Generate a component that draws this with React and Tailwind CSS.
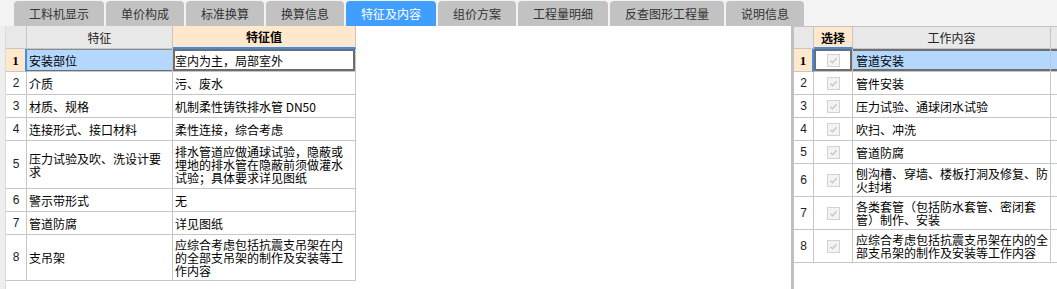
import React from 'react';

const tabs = [
  { label: '工料机显示', w: 'w-[90px]' },
  { label: '单价构成', w: 'w-[78px]' },
  { label: '标准换算', w: 'w-[78px]' },
  { label: '换算信息', w: 'w-[78px]' },
  { label: '特征及内容', w: 'w-[90px]', active: true },
  { label: '组价方案', w: 'w-[78px]' },
  { label: '工程量明细', w: 'w-[90px]' },
  { label: '反查图形工程量', w: 'w-[114px]' },
  { label: '说明信息', w: 'w-[78px]' },
];

const features = [
  { name: '安装部位', value: '室内为主，局部室外', h: 'h-[23px]' },
  { name: '介质', value: '污、废水', h: 'h-[23px]' },
  { name: '材质、规格', value: '机制柔性铸铁排水管 DN50', h: 'h-[23px]' },
  { name: '连接形式、接口材料', value: '柔性连接，综合考虑', h: 'h-[23px]' },
  {
    name: '压力试验及吹、洗设计要求',
    value: '排水管道应做通球试验，隐蔽或埋地的排水管在隐蔽前须做灌水试验；具体要求详见图纸',
    h: 'h-[48px]',
  },
  { name: '警示带形式', value: '无', h: 'h-[23px]' },
  { name: '管道防腐', value: '详见图纸', h: 'h-[23px]' },
  {
    name: '支吊架',
    value: '应综合考虑包括抗震支吊架在内的全部支吊架的制作及安装等工作内容',
    h: 'h-[46px]',
  },
];

const works = [
  { text: '管道安装', h: 'h-[23px]' },
  { text: '管件安装', h: 'h-[23px]' },
  { text: '压力试验、通球闭水试验', h: 'h-[23px]' },
  { text: '吹扫、冲洗', h: 'h-[23px]' },
  { text: '管道防腐', h: 'h-[23px]' },
  { text: '刨沟槽、穿墙、楼板打洞及修复、防火封堵', h: 'h-[33px]' },
  { text: '各类套管（包括防水套管、密闭套管）制作、安装', h: 'h-[33px]' },
  { text: '应综合考虑包括抗震支吊架在内的全部支吊架的制作及安装等工作内容', h: 'h-[33px]' },
];

const RowNum = ({ n, selected, w }) => (
  <div
    className={`${w} shrink-0 flex items-center justify-center border-b border-[#c6c6c6] ${
      selected
        ? 'bg-[#ffe8cc] border-r-2 border-r-[#3d8eea] font-bold text-[13px] [font-family:"Liberation_Serif",serif]'
        : 'border-r text-[12px] text-[#222] [font-family:"Liberation_Sans",sans-serif]'
    }`}
  >
    {n}
  </div>
);

const CheckBox = () => (
  <svg width="13" height="13" viewBox="0 0 13 13">
    <rect x="0.5" y="0.5" width="12" height="12" fill="#f3f3f3" stroke="#d2d2d2" />
    <path d="M3.5 6.8 L5.6 8.8 L9.6 4.2" fill="none" stroke="#c6c6c6" strokeWidth="1.4" />
  </svg>
);

const App = () => {
  return (
    <div className='w-[1057px] h-[289px] overflow-hidden bg-white text-black [font-family:"Noto_Sans_CJK_SC",sans-serif] [text-spacing-trim:space-all]'>
      {/* tabs */}
      <div className="flex items-end gap-[2px] pl-[14px] h-[26px] bg-[#f3f3f3]">
        {tabs.map((tab) => (
          <div
            key={tab.label}
            className={`${tab.w} h-[25px] flex items-center justify-center rounded-t-[4px] text-[12px] ${
              tab.active ? 'bg-[#409eff] text-white' : 'bg-[#c2c2c2] text-[#333]'
            }`}
          >
            {tab.label}
          </div>
        ))}
      </div>

      <div className="flex h-[263px]">
        <div className="w-[6px] shrink-0 bg-[#eeeeee] border-r border-[#dadada]" />

        {/* feature table */}
        <div className="w-[350px] shrink-0 text-[12px] leading-[13px]">
          <div className="flex h-[23px]">
            <div className="w-[21px] bg-[#e8e8e8] border-r border-b border-[#c6c6c6]" />
            <div className="w-[146px] flex items-center justify-center bg-[#e8e8e8] border-r border-b border-[#c6c6c6] text-[#222]">
              特征
            </div>
            <div className="w-[183px] flex items-center justify-center bg-[#ffe8cc] border-r border-[#c6c6c6] border-b-2 border-b-[#3d8eea] font-bold">
              特征值
            </div>
          </div>
          {features.map((row, i) => {
            const selected = i === 0;
            return (
              <div key={row.name} className={`flex ${row.h}`}>
                <RowNum n={i + 1} selected={selected} w="w-[21px]" />
                <div
                  className={`w-[146px] flex items-center pl-[2px] border-r border-b border-[#c6c6c6] ${
                    selected
                      ? 'bg-[#b3d7ff] shadow-[inset_0_1px_0_#8a8a8a,inset_0_-1px_0_#6e6e6e]'
                      : ''
                  }`}
                >
                  {row.name}
                </div>
                <div
                  className={`w-[183px] flex items-center pl-[2px] pr-[4px] border-r border-b border-[#c6c6c6] ${
                    selected ? 'shadow-[inset_0_0_0_2px_#6e6e6e]' : ''
                  }`}
                >
                  {row.value}
                </div>
              </div>
            );
          })}
        </div>

        <div className="flex-1 bg-white" />
        <div className="w-[3px] shrink-0 bg-[#c0c0c0]" />

        {/* work content table */}
        <div className="w-[263px] shrink-0 border-t border-[#c4c4c4] text-[12px] leading-[13px]">
          <div className="flex h-[22px]">
            <div className="w-[20px] bg-[#e8e8e8] border-r border-b border-[#c6c6c6]" />
            <div className="w-[39px] flex items-center justify-center bg-[#ffe8cc] border-r border-[#c6c6c6] border-b-2 border-b-[#3d8eea] font-bold">
              选择
            </div>
            <div className="w-[198px] flex items-center justify-center bg-[#e8e8e8] border-r border-b border-[#c6c6c6] text-[#222]">
              工作内容
            </div>
            <div className="flex-1 bg-[#e8e8e8] border-b border-[#c6c6c6]" />
          </div>
          {works.map((row, i) => {
            const selected = i === 0;
            return (
              <div key={row.text} className={`flex ${row.h}`}>
                <RowNum n={i + 1} selected={selected} w="w-[20px]" />
                <div
                  className={`w-[39px] flex items-center justify-center border-r border-b border-[#c6c6c6] ${
                    selected ? 'shadow-[inset_0_0_0_2px_#6e6e6e]' : ''
                  }`}
                >
                  <CheckBox />
                </div>
                <div
                  className={`w-[198px] flex items-center pl-[3px] border-r border-b border-[#c6c6c6] ${
                    selected
                      ? 'bg-[#b3d7ff] shadow-[inset_0_2px_0_#6e6e6e,inset_0_-2px_0_#6e6e6e]'
                      : ''
                  }`}
                >
                  {row.text}
                </div>
                <div
                  className={`flex-1 border-b border-[#c6c6c6] ${
                    selected
                      ? 'bg-[#b3d7ff] shadow-[inset_0_2px_0_#6e6e6e,inset_0_-2px_0_#6e6e6e]'
                      : ''
                  }`}
                />
              </div>
            );
          })}
        </div>
      </div>
    </div>
  );
};

export default App;
